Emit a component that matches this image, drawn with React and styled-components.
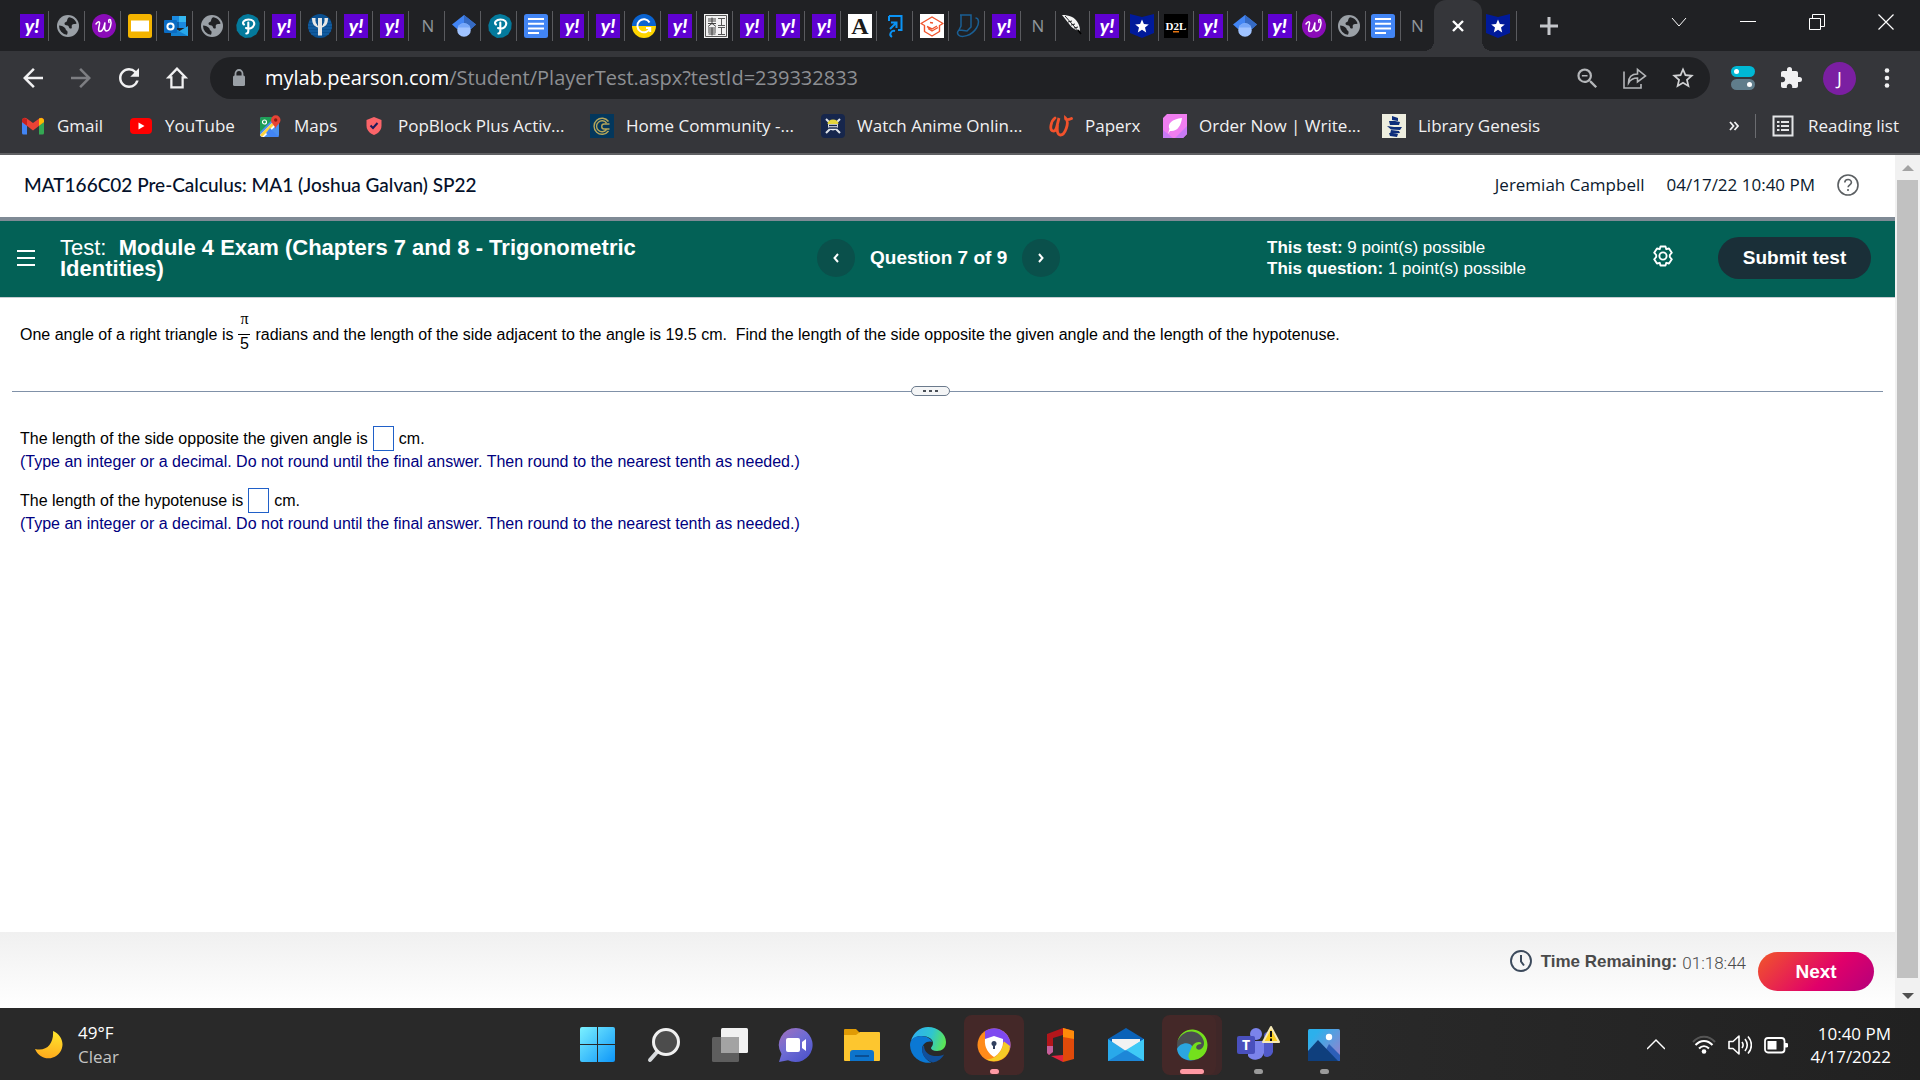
import React from "react";
import styled, { createGlobalStyle } from "styled-components";

const ui = '"Open Sans", "Noto Sans", sans-serif';
const arial = '"Liberation Sans", Arial, sans-serif';

const Global = createGlobalStyle`
  * { box-sizing: border-box; }
  body { margin: 0; background: #fff; font-family: ${arial}; }
  button { border: 0; padding: 0; background: none; font: inherit; color: inherit; cursor: pointer; }
  a { color: inherit; text-decoration: none; }
  svg { display: block; flex: none; }
`;

const Screen = styled.div`
  min-height: 100vh;
  display: flex;
  flex-direction: column;
`;

/* ---------- browser chrome ---------- */

const TabStrip = styled.div`
  height: 51px;
  background: #202124;
  display: flex;
  padding-left: 14px;
`;
const TabGroup = styled.div`
  display: flex;
  flex: 0 0 ${(p) => p.$width}px;
`;
const Tab = styled.button`
  flex: 1 1 0;
  min-width: 0;
  display: flex;
  align-items: center;
  justify-content: space-between;
  padding-left: ${(p) => (p.$tight ? 4 : 6)}px;
  &::after {
    content: "";
    width: 1px;
    height: 30px;
    margin-right: 1px;
    background: #5a5b5f;
    visibility: ${(p) => (p.$last ? "hidden" : "visible")};
  }
`;
const ActiveTab = styled.button`
  flex: 0 0 48px;
  margin-left: -2px;
  border-radius: 12px 12px 0 0;
  background: #35363a;
  display: flex;
  align-items: center;
  justify-content: center;
  position: relative;
  &::before, &::after {
    content: "";
    position: absolute;
    bottom: 0;
    width: 10px;
    height: 10px;
  }
  &::before { right: 100%; background: radial-gradient(circle at 0 0, transparent 10px, #35363a 10px); }
  &::after { left: 100%; background: radial-gradient(circle at 100% 0, transparent 10px, #35363a 10px); }
`;
const NewTab = styled.button`
  width: 62px;
  display: grid;
  place-items: center;
`;
const WindowButtons = styled.div`
  margin-left: auto;
  display: flex;
  height: 44px;
`;
const WindowButton = styled.button`
  width: 69px;
  display: grid;
  place-items: center;
`;

const Toolbar = styled.div`
  height: 54px;
  background: #35363a;
  display: flex;
  align-items: center;
  padding: 0 18px 0 9px;
`;
const ToolButton = styled.button`
  width: 48px;
  height: 42px;
  display: grid;
  place-items: center;
`;
const Omnibox = styled.div`
  flex: 1;
  height: 42px;
  margin: 0 9px;
  padding: 0 3px 0 20px;
  border-radius: 21px;
  background: #202124;
  display: flex;
  align-items: center;
`;
const Address = styled.div`
  flex: 1;
  margin-left: 17px;
  font: 20px/28px ${ui};
  color: #8d8f93;
  white-space: nowrap;
  b { font-weight: 400; color: #fff; }
`;
const Avatar = styled.button`
  width: 33px;
  height: 33px;
  margin: 0 8px;
  border-radius: 50%;
  background: #7b1fa2;
  color: #fff;
  font: 18px/33px ${ui};
`;
const DotsButton = styled(ToolButton)`
  width: 30px;
  margin-left: 8px;
`;

const Bookmarks = styled.nav`
  height: 50px;
  background: #35363a;
  border-bottom: 2px solid #5f6063;
  display: flex;
  align-items: center;
  padding: 0 21px 6px;
  font: 17px/24px ${ui};
  color: #f1f1f2;
  white-space: nowrap;
`;
const Bookmark = styled.a`
  display: flex;
  align-items: center;
  gap: 12px;
  flex: 0 0 ${(p) => p.$width}px;
`;
const BookmarkEnd = styled.div`
  margin-left: auto;
  display: flex;
  align-items: center;
  gap: 16px;
`;
const Rule = styled.span`
  width: 1px;
  height: 24px;
  background: #6b6c70;
`;
const ReadingList = styled.button`
  display: flex;
  align-items: center;
  gap: 14px;
`;

/* ---------- page ---------- */

const Viewport = styled.div`
  flex: 1;
  display: flex;
`;
const Page = styled.main`
  flex: 1;
  display: flex;
  flex-direction: column;
  background: #fff;
`;
const CourseBar = styled.header`
  height: 66px;
  border-bottom: 4px solid #7f8a95;
  display: flex;
  align-items: center;
  gap: 22px;
  padding: 0 36px 2px 24px;
  color: #0b1a2e;
  font: 17px/24px ${ui};
`;
const CourseName = styled.h1`
  margin: 0 auto 0 0;
  font: 500 19px/24px Lato, sans-serif;
  color: #05112a;
`;
const TestBar = styled.section`
  min-height: 77px;
  background: #036156;
  border-bottom: 1px solid #c7cdd1;
  color: #fff;
  display: grid;
  grid-template-columns: 60px 757fr 450fr 385fr 66px 153px;
  align-items: center;
  padding: 0 24px 2px 0;
`;
const MenuButton = styled.button`
  padding-left: 17px;
`;
const TestTitle = styled.h2`
  margin: 0;
  max-width: 600px;
  font: 400 22px/21px ${arial};
`;
const QuestionNav = styled.div`
  display: flex;
  align-items: center;
  gap: 15px;
  font: bold 19px/24px ${arial};
`;
const Round = styled.button`
  width: 38px;
  height: 38px;
  border-radius: 50%;
  background: #0a504b;
  display: grid;
  place-items: center;
`;
const Points = styled.p`
  margin: 0;
  font-size: 17px;
  line-height: 21px;
`;
const SettingsButton = styled.button`
  padding-bottom: 4px;
`;
const SubmitButton = styled.button`
  height: 42px;
  border-radius: 21px;
  background: #1a2f38;
  color: #fff;
  font: bold 19px/24px ${arial};
`;

const Exercise = styled.section`
  flex: 1;
  padding: 12px 12px 0;
  font-size: 16px;
  line-height: 23px;
  color: #000;
`;
const Prompt = styled.p`
  margin: 0 8px;
  display: flex;
  align-items: center;
  gap: 5px;
  white-space: pre;
`;
const Fraction = styled.span`
  display: inline-flex;
  flex-direction: column;
  align-items: center;
  width: 12px;
  line-height: 18px;
  padding-bottom: 6px;
  span:first-child {
    align-self: stretch;
    text-align: center;
    padding-bottom: 6px;
    border-bottom: 1px solid #000;
    font-family: "Liberation Serif", serif;
  }
`;
const Splitter = styled.div`
  display: flex;
  align-items: center;
  margin: 27px 0 29px;
  &::before, &::after {
    content: "";
    flex: 27;
    height: 1px;
    background: #8091a8;
  }
  &::after { flex: 28; }
`;
const Handle = styled.button`
  width: 39px;
  height: 10px;
  border: 1px solid #6b7a8c;
  border-radius: 5px;
  background: #f4f5f6;
  display: flex;
  align-items: center;
  justify-content: center;
  gap: 3px;
  i { width: 3px; height: 2px; background: #4a4f57; }
`;
const Answer = styled.div`
  margin: 0 8px 16px;
  label { display: flex; align-items: center; gap: 5px; height: 27px; }
`;
const AnswerBox = styled.input`
  width: 21px;
  height: 25px;
  padding: 0 2px;
  border: 1px solid #2060c8;
  font: 16px/23px ${arial};
`;
const Hint = styled.p`
  margin: 0;
  line-height: 19px;
  color: #000080;
`;

const Footer = styled.footer`
  height: 76px;
  background: linear-gradient(#f0f0f0, #fff);
  display: flex;
  align-items: flex-start;
  justify-content: flex-end;
  gap: 12px;
  padding: 18px 21px 0;
`;
const Timer = styled.div`
  display: flex;
  gap: 5px;
  font: 17px/24px ${arial};
  color: #4a4a4a;
  svg { margin-right: 4px; }
  time { font-family: Roboto, sans-serif; font-weight: 300; line-height: 26px; }
`;
const NextButton = styled.button`
  width: 116px;
  height: 39px;
  margin-top: 2px;
  border-radius: 20px;
  background: linear-gradient(135deg, #f0502f 5%, #e0006a 60%, #b3007c);
  color: #fff;
  font: bold 19px/24px ${arial};
`;

const Scrollbar = styled.div`
  width: 25px;
  background: #f1f1f1;
  display: flex;
  flex-direction: column;
  align-items: center;
`;
const ScrollArrow = styled.button`
  height: ${(p) => p.$size}px;
  display: grid;
  place-items: center;
`;
const Thumb = styled.div`
  flex: 1;
  width: 21px;
  background: #c1c1c1;
`;

/* ---------- taskbar ---------- */

const Taskbar = styled.footer`
  height: 72px;
  padding: 2px 0 0 2px;
  background: linear-gradient(90deg, #292929 70%, #212121);
  color: #fff;
  display: grid;
  grid-template-columns: 1fr auto 1fr;
  align-items: center;
  font: 17px/23px ${ui};
`;
const Weather = styled.button`
  justify-self: start;
  display: flex;
  align-items: center;
  gap: 14px;
  padding-left: 32px;
  text-align: left;
  line-height: 24px;
  span span { display: block; }
  span span + span { color: #c4c4c4; }
`;
const Apps = styled.div`
  display: flex;
  gap: 6px;
`;
const AppButton = styled.button`
  width: 60px;
  height: 60px;
  border-radius: 8px;
  background: ${(p) => (p.$lit ? "#442828" : "none")};
  box-shadow: ${(p) => (p.$stack ? "inset -6px 0 #3f2728" : "none")};
  display: grid;
  place-items: center;
  position: relative;
  &::after {
    content: "";
    position: absolute;
    bottom: 1px;
    height: 5px;
    border-radius: 3px;
    width: ${(p) => p.$bar || 0}px;
    background: ${(p) => (p.$lit ? "#ff99a4" : "#9a9a9a")};
  }
`;
const Tray = styled.div`
  justify-self: end;
  display: flex;
  align-items: center;
  gap: 12px;
  padding-right: 29px;
`;
const Clock = styled.div`
  margin-left: 7px;
  min-width: 84px;
  text-align: right;
`;
const TrayChevron = styled.button`
  margin-right: 15px;
`;

/* ---------- favicons ---------- */

const Glyph = styled.span`
  width: 24px;
  height: 24px;
  flex: none;
  display: grid;
  place-items: center;
  background: ${(p) => p.$bg || "none"};
  color: ${(p) => p.$fg || "#fff"};
  font: ${(p) => p.$font};
`;
const Ic = ({ s = 24, vb = "0 0 24 24", children, ...r }) => (
  <svg width={s} height={s} viewBox={vb} fill="none" aria-hidden="true" {...r}>{children}</svg>
);

const Yahoo = () => <Glyph $bg="#5f01d1" $font='italic 900 19px/20px Lato, sans-serif'>y!</Glyph>;
const Letter = () => <Glyph $fg="#8f969b" $font={`17px/24px ${ui}`}>N</Glyph>;
const SerifA = () => <Glyph $bg="#fff" $fg="#1a1a1a" $font='bold 24px/24px "Liberation Serif", serif'>A</Glyph>;
const D2L = () => (
  <Ic><rect width="24" height="24" fill="#000" /><text x="12" y="16" textAnchor="middle" fontSize="11" fontWeight="bold" fontFamily="Liberation Serif, serif" fill="#fff">D2L</text><path d="M9 17h6v1.500H9z" fill="#e87511" /></Ic>
);
const Globe = () => (
  <Ic><circle cx="12" cy="12" r="11" fill="#9aa0a6" /><path d="M3 11.500c3 0 4.500 1 6 2.500 1 1 .5 2 1.500 2.500 1.200.6 1.500 2 .5 4.300A9 9 0 0 1 3 11.500zM13 3.200c3.800.5 6.800 3 7.600 6.300-1.600 1-3.600 0-4.600 1.500-1 1.400 1 3.500-1.500 3.500-2 0-1-2.500-3-3-1.500-.4-3-.5-3-2s1.500-1 2.300-2.200C11.500 6 11 4.500 13 3.200z" fill="#202124" /></Ic>
);
const Wiris = () => (
  <Ic><circle cx="12" cy="12" r="12" fill="#8a0cb8" /><path d="M4 10c2-3 4-3 3.500 0s-2 7.500.5 7.500 4-4 5-9c-.5 4-1 8.500 1.500 8.500 3.500 0 5.500-8 4-11-1-1.500-2.500 0-1.500 2.500" stroke="#fff" strokeWidth="1.500" strokeLinecap="round" /></Ic>
);
const Slides = () => <Ic><rect width="24" height="24" rx="2.500" fill="#f4b400" /><path d="M3 6.500h18v11H3z" fill="#fff" /></Ic>;
const Docs = () => <Ic><rect width="24" height="24" rx="2.500" fill="#4285f4" /><path d="M4 5h16M4 9.700h16M4 14.400h16M4 19h11" stroke="#fff" strokeWidth="2" /></Ic>;
const Outlook = () => (
  <Ic><path d="M8 2h14v12H8z" fill="#1a8ae0" /><path d="M15 2h7v6h-7z" fill="#35b8f1" /><path d="M8 8h7v6H8z" fill="#0f5fa8" /><path d="M7 12l8.500 5L24 12v10H7z" fill="#28a8ea" /><path d="M7 13v9h17z" fill="#1380ce" /><rect y="6" width="13" height="13" rx="1" fill="#0a6cc4" /><circle cx="6.500" cy="12.500" r="3.100" stroke="#fff" strokeWidth="2" /></Ic>
);
const Pearson = () => (
  <Ic><path d="M12 0l5 1.200L21.500 4 23.700 9l-.5 6-3 5.500L15 23.500 9 24l-5-3L.8 16.500.3 11 2.500 5 7 1.200z" fill="#047a9c" /><path d="M8 10.500C5.500 9 8 5.500 12.500 5.500S19 8 18 11s-5 4.500-8 3M12.300 8.500v8.500c0 1.800-.8 2.500-2 2.500" stroke="#fff" strokeWidth="2.100" strokeLinecap="round" /></Ic>
);
const Psi = () => (
  <Ic><circle cx="12" cy="12" r="12" fill="#0a4f8f" /><path d="M1 8h22M0 11h24M0 14h24M1 17h22M3 20h18M3 5h18" stroke="#1c6cb4" strokeWidth=".8" /><path d="M4 4h3.500c-.3 4 .5 6 2.500 7V4h4v7c2-1 2.800-3 2.500-7H20c0 5.500-2 8.500-6 9.500v8h-4v-8C6 12.500 4 9.500 4 4z" fill="#e6e6e6" /><path d="M9.500 4v7.500M14.500 4v7.500" stroke="#0a4f8f" /></Ic>
);
const Scholar = () => (
  <Ic><path d="M12 1L24 10.500 19 15H5L0 10.500z" fill="#4285f4" /><path d="M12 1L24 10.500 19 15 12 9z" fill="#356ac3" /><circle cx="12" cy="16" r="6.800" fill="#a0c3ff" /><path d="M5.700 13.500a6.800 6.800 0 0 1 12.600 0z" fill="#76a7fa" /></Ic>
);
const Grammar = () => (
  <Ic><path d="M0 12a12 12 0 0 1 24 0z" fill="#0a63d0" /><path d="M0 12a12 12 0 0 0 24 0z" fill="#ffd500" /><path d="M17.500 8.500A6.500 6.500 0 1 0 18 14h-4M18.200 13.500V18" stroke="#fff" strokeWidth="2" /></Ic>
);
const Seal = () => (
  <Ic><rect width="24" height="24" fill="#f2f2f2" /><path d="M1.500 1.500h21v21h-21zM14 4.500h7M17.500 4.500v7M14 11.500h7M14 13.500h7M17.500 13.500v7M14 20.500h7" stroke="#555" /><path d="M4 5h8M4 7h8M4 9.500h8M8 3.500v6M8 9.500l-4 3M8 9.500l4 3M4 14h8M4 16h8M4 18h8M8 13.500v8M4.500 20h7" stroke="#333" strokeWidth=".9" /></Ic>
);
const ArrowSquare = () => <Ic><path d="M5 2h12.500v14H14M5 2v5M11 17c-4-1-6.500 4-3 6M6 15l6.500-6.500M7 8.500h5.500V14" stroke="#0a93f5" strokeWidth="2" /></Ic>;
const Cap = () => (
  <Ic><rect width="24" height="24" fill="#fff" /><path d="M12 3L1 9.500l3.500 2v6L12 22l7.500-4.500v-6l3.500-2zM8 14.500l4 2.500 6-3.500M7 12.500L12 15l5-3M10 8.500l3 .5" stroke="#f0542c" strokeWidth="1.400" strokeLinejoin="round" /></Ic>
);
const Orbit = () => <Ic><path d="M4 1h11v12l-4 4-7-1c-2 0-3.500 3-1.500 5 3 3 13 1 18-7 3-5 2.500-10-1-10M5 1v11l-2 4" stroke="#1a5f94" strokeWidth="1.500" /></Ic>;
const Feather = () => <Ic><path d="M1 1c7 0 13 2 16 8 1.500 3 2 5 2 8-4-.5-8-3-10.500-6.500z" fill="#f4f4f4" /><path d="M4 2l15 17M7 8l4-1M10 11l4-1M13 14l4-1" stroke="#202124" strokeWidth="1" /><path d="M17 16l3 4" stroke="#000" strokeWidth="1.500" /></Ic>;
const Star = () => <Ic><path d="M0 0l12 3L24 0v19l-12 5-12-5z" fill="#001a9a" /><path d="M12 5.500l1.900 4.600 4.900.3-3.800 3.200 1.200 4.800L12 15.800l-4.200 2.600L9 13.600l-3.800-3.200 4.900-.3z" fill="#fff" /></Ic>;

const firstTabs = [Yahoo, Globe, Wiris, Slides, Outlook, Globe, Pearson, Yahoo, Psi, Yahoo, Yahoo, Letter, Scholar, Pearson, Docs, Yahoo, Yahoo, Grammar, Yahoo, Seal, Yahoo, Yahoo, Yahoo, SerifA, ArrowSquare, Cap, Orbit, Yahoo];
const secondTabs = [Letter, Feather, Yahoo, Star, D2L, Yahoo, Scholar, Yahoo, Wiris, Globe, Docs, Letter];

const Gmail = () => (
  <Ic><path d="M1 6v13a1.500 1.500 0 0 0 1.500 1.500H6V10z" fill="#4285f4" /><path d="M23 6v13a1.500 1.500 0 0 1-1.500 1.500H18V10z" fill="#34a853" /><path d="M1 6.500C1 4 4 3 5.800 4.500L12 9l6.200-4.500C20 3 23 4 23 6.500V8l-11 8.500L1 8z" fill="#ea4335" /><path d="M18 4.600c2-1.500 5-.5 5 2V8l-5 3.800z" fill="#fbbc04" /><path d="M1 6.500C1 5 2 4 3 3.900L6 5v6.800L1 8z" fill="#c5221f" /></Ic>
);
const YouTube = () => <Ic><rect x="1" y="4" width="22" height="16" rx="4" fill="#f00" /><path d="M9.500 8.500v7l6-3.500z" fill="#fff" /></Ic>;
const Maps = () => (
  <Ic><rect x="2" y="3" width="19" height="20" rx="2" fill="#4a90f0" /><path d="M2 5a2 2 0 0 1 2-2h13L2 18z" fill="#1e9e57" /><path d="M2 21l17-17 2 2v3L6 23H4z" fill="#fff" /><path d="M2 21L14 9l2 2L4 23z" fill="#fdd23c" /><path d="M12 14l9 9h-9l-4-4z" fill="#4285f4" /><path d="M17.500 15c-.5-4-4.500-5-4.500-9a4.500 4.500 0 0 1 9.500 0c0 4-4.500 5-5 9z" fill="#e74335" /><circle cx="17.700" cy="6" r="1.700" fill="#8c1a11" /><circle cx="6.500" cy="8" r="2" stroke="#fff" strokeWidth="1.200" /></Ic>
);
const PopBlock = () => <Ic><path d="M12 3l7.500 3v5.500c0 4.500-3 7.800-7.500 9.500-4.500-1.700-7.500-5-7.500-9.500V6z" fill="#fb6469" /><path d="M8.500 11.500L11 14l4.500-5" stroke="#1c1b5c" strokeWidth="2" /></Ic>;
const College = () => <Ic><rect width="24" height="24" fill="#03375c" /><path d="M18.500 7.500A8 8 0 1 0 18.500 17M16.500 9a5.500 5.500 0 1 0 0 6.500M19.500 10H14c-3 0-3 5 0 5h5.500" stroke="#b4a55a" strokeWidth="1.400" /></Ic>;
const Anime = () => <Ic><rect width="24" height="24" rx="4" fill="#16264c" /><path d="M5 5l14 14M19 5L5 19" stroke="#dfe4ea" strokeWidth="2" /><circle cx="12" cy="11.500" r="5" fill="#eceff2" /><path d="M6.500 10a5.500 4.500 0 0 1 11 0z" fill="#e6d63c" /><path d="M8 11.500h8M8 14h8" stroke="#16264c" strokeWidth="1.300" /></Ic>;
const PaperxIcon = () => <Ic><path d="M6 4C2 7 0 16 4 17s4.500-9 6-13c-2 6-3 16 1 17 5 .5 10-13 5.500-17 0 2 2.500 2 6 .5" stroke="#f2522c" strokeWidth="2.800" strokeLinecap="round" /></Ic>;
const Quill = () => <Ic><path d="M4 0h20v20l-4 4H0V4z" fill="#f07ef0" /><path d="M0 16l10 8H0zM24 12v8l-4 4h-8z" fill="#c87af4" /><path d="M19 4C9 5 4 10 6.500 15L5 20l2-3c7 1 11-5 12-13z" fill="#fff" /></Ic>;
const Genesis = () => <Ic><rect width="24" height="24" fill="#eeeedf" /><path d="M10 2l6 2v3l-6-1zM7 7h6l5 1-1 3H8zM5 12l7 1h8l-2 3-9-.5zM9 16l8 1 1 2-10 1zM7 19l9 1-1 3-7-1z" fill="#0d2d7a" /></Ic>;

const bookmarks = [
  ["Gmail", Gmail, 108], ["YouTube", YouTube, 129], ["Maps", Maps, 104], ["PopBlock Plus Activ...", PopBlock, 228],
  ["Home Community -...", College, 231], ["Watch Anime Onlin...", Anime, 228], ["Paperx", PaperxIcon, 114],
  ["Order Now | Write...", Quill, 219], ["Library Genesis", Genesis, 156],
];

/* ---------- taskbar app icons ---------- */

const Start = () => (
  <Ic s={36} vb="0 0 36 36"><defs><linearGradient id="win" x1="0" y1="0" x2="36" y2="36" gradientUnits="userSpaceOnUse"><stop stopColor="#7bf1ff" /><stop offset="1" stopColor="#0a93f8" /></linearGradient></defs><path d="M2 0h15v17H0V2a2 2 0 0 1 2-2zM18 0h15a2 2 0 0 1 2 2v15H18zM0 18h17v17H2a2 2 0 0 1-2-2zM18 18h17v15a2 2 0 0 1-2 2H18z" fill="url(#win)" /></Ic>
);
const Search = () => <Ic s={36} vb="0 0 36 36"><path d="M11 25L4 33" stroke="#d6d9dc" strokeWidth="4" strokeLinecap="round" /><circle cx="20" cy="15" r="12.500" fill="#4c4c4c" stroke="#f0f0f0" strokeWidth="3" /></Ic>;
const TaskView = () => <Ic s={36} vb="0 0 36 36"><rect x="9" y="1" width="27" height="25" rx="1.500" fill="#f1f1f1" /><rect y="10" width="27" height="25" rx="1.500" fill="#5e5e5e" /><path d="M9 10h18v16H9z" fill="#a3a3a3" /></Ic>;
const Chat = () => (
  <Ic s={36} vb="0 0 36 36"><defs><linearGradient id="chat" x1="4" y1="4" x2="26" y2="32" gradientUnits="userSpaceOnUse"><stop stopColor="#9a6fc0" /><stop offset=".5" stopColor="#6f6cd4" /><stop offset="1" stopColor="#5257cc" /></linearGradient></defs><path d="M18 1a17 17 0 1 1-8 32.200L1 35l2.500-8A17 17 0 0 1 18 1z" fill="url(#chat)" /><rect x="8" y="11" width="14" height="14" rx="2" fill="#fff" /><path d="M24 15l4-3v12l-4-3z" fill="#fff" /></Ic>
);
const Explorer = () => <Ic s={36} vb="0 0 36 36"><path d="M0 3a1 1 0 0 1 1-1h11l4 4v5H0z" fill="#e09b05" /><path d="M0 8h12l4-3h19a1 1 0 0 1 1 1v27a1 1 0 0 1-1 1H1a1 1 0 0 1-1-1z" fill="#fdc62f" /><path d="M6 34v-8a3 3 0 0 1 3-3h18a3 3 0 0 1 3 3v8z" fill="#0d74cc" /><path d="M11 29h14" stroke="#0a4f94" strokeWidth="2" /></Ic>;
const Edge = () => (
  <Ic s={36} vb="0 0 36 36"><defs><linearGradient id="edge" x1="2" y1="8" x2="34" y2="18" gradientUnits="userSpaceOnUse"><stop stopColor="#2fb0ef" /><stop offset=".55" stopColor="#2fc5d0" /><stop offset="1" stopColor="#5be556" /></linearGradient></defs><path d="M1 14C3 6 10 0 18 0c10 0 18 7 18 15 0 6-4 9-9 9-4 0-6-1.500-6-3 0-1 2-2 2-5 0-4-5-7-11-7-5 0-9 2-11 5z" fill="url(#edge)" /><path d="M0 18c0-6 5-9 11-9 6 0 10 3 11.500 6-6-2-12 3-10 10 1 5 5 9 9 10.500A18 18 0 0 1 0 18z" fill="#0b78d4" /><path d="M13 19c-3 6 2 15 10 16.400 5-1 9-4 11-8-8 4-20 1-20-9z" fill="#10509c" /></Ic>
);
const SecureBrowser = () => <Ic s={34} vb="0 0 34 34"><circle cx="17" cy="17" r="16.500" fill="#ff8b1a" /><path d="M8 3a16.500 16.500 0 0 1 25 18l-9-9-16-1z" fill="#7f4af0" /><path d="M33 18A16.500 16.500 0 0 1 9 31.500c6 0 15-3 18-18z" fill="#f5cb26" /><path d="M17 8l9 3c1 9-4 15-9 18-5-3-10-9-9-18z" fill="#fff" /><circle cx="17" cy="15.500" r="2.500" fill="#32405e" /><path d="M16 16h2v5h-2z" fill="#32405e" /></Ic>;
const Office = () => <Ic s={34} vb="0 0 34 34"><path d="M20 0L4 6v19l2 2 4-3V10l10-3z" fill="#b3161b" /><path d="M4 18v7l2 2 4-3v-6z" fill="#c4609c" /><path d="M20 0l11 3v28l-11 3z" fill="#e04a0a" /><path d="M20 0l11 3v8l-11-2z" fill="#ff8a0a" /><path d="M8 28l12-1v7z" fill="#e3233f" /></Ic>;
const Mail = () => <Ic s={36} vb="0 0 36 36"><path d="M0 12L18 1l18 11v6H0z" fill="#0a62b8" /><path d="M4 12h28v9l-14 8L4 21z" fill="#f2f2f2" /><path d="M0 12l18 12 18-12v22H0z" fill="#29a9ea" /><path d="M36 12v22L18 23z" fill="#3fcaf6" /><path d="M0 34l18-11 18 11z" fill="#1d87d8" /></Ic>;
const Swirl = () => (
  <Ic s={34} vb="0 0 34 34"><circle cx="17" cy="17" r="15" fill="#4b4f52" /><path d="M2 21c2-6 12-8 15-3 2 4-1 8 3 14C10 34 3 29 2 21z" fill="#2ba6e0" /><path d="M2 15C4 5 12 1 18 1.500c8 .5 14.500 7 14.500 15.500C32.500 26 25 33 15 32c-3-4-1-6 0-9 2-6 5-9 9-9 2 0 3 1 2 2-4 0-6 3-4 5 3 2 7-1 7-6 0-5-5-11-12-11.500C10 3 4 8 2 15z" fill="#74e01c" /></Ic>
);
const Teams = () => <Ic s={44} vb="0 0 44 44"><circle cx="20" cy="11" r="6" fill="#7b83eb" /><circle cx="32" cy="13" r="4" fill="#5059c9" /><path d="M26 18h11v11a6 6 0 0 1-9 4z" fill="#5059c9" /><path d="M12 18h16v12a9 9 0 0 1-16 3z" fill="#7b83eb" /><rect x="1" y="13" width="18" height="18" rx="2" fill="#4950bd" /><text x="10" y="27" textAnchor="middle" fontSize="14" fontWeight="bold" fontFamily="Open Sans, sans-serif" fill="#fff">T</text><path d="M35 4l8 15H27z" fill="#fdd022" stroke="#f5e9b8" strokeWidth="2" strokeLinejoin="round" /><path d="M35 8v6M35 15.500V18" stroke="#111" strokeWidth="2" /></Ic>;
const Photos = () => <Ic s={32} vb="0 0 32 32"><defs><linearGradient id="pic" x1="8" y1="4" x2="32" y2="24" gradientUnits="userSpaceOnUse"><stop stopColor="#2cb0ec" /><stop offset="1" stopColor="#8d86cf" /></linearGradient></defs><rect width="32" height="32" rx="1.500" fill="url(#pic)" /><path d="M21 15L32 26v6H12z" fill="#2d5fb8" /><path d="M0 22L10 11l20 21H0z" fill="#0f3f7d" /><circle cx="21" cy="8" r="3.200" fill="#fff" /></Ic>;

const apps = [
  ["Start", Start], ["Search", Search], ["Task view", TaskView], ["Chat", Chat], ["File Explorer", Explorer], ["Edge", Edge],
  ["Secure Browser", SecureBrowser, { $lit: true, $bar: 9 }], ["Office", Office], ["Mail", Mail],
  ["Webroot", Swirl, { $lit: true, $stack: true, $bar: 24 }], ["Teams", Teams, { $bar: 9 }], ["Photos", Photos, { $bar: 9 }],
];

const hint = "(Type an integer or a decimal. Do not round until the final answer. Then round to the nearest tenth as needed.)";

export default function App() {
  return (
    <Screen>
      <Global />
      <TabStrip>
        <TabGroup $width={1008}>
          {firstTabs.map((Icon, i) => <Tab key={i}><Icon /></Tab>)}
        </TabGroup>
        <TabGroup $width={414}>
          {secondTabs.map((Icon, i) => <Tab key={i} $tight $last={i === secondTabs.length - 1}><Icon /></Tab>)}
        </TabGroup>
        <ActiveTab aria-label="Close tab">
          <Ic s={14} vb="0 0 14 14"><path d="M2 2l10 10M12 2L2 12" stroke="#fff" strokeWidth="2.400" /></Ic>
        </ActiveTab>
        <TabGroup $width={36}><Tab $tight><Star /></Tab></TabGroup>
        <NewTab aria-label="New tab">
          <Ic s={18} vb="0 0 18 18"><path d="M9 0v18M0 9h18" stroke="#c4c6ca" strokeWidth="3" /></Ic>
        </NewTab>
        <WindowButtons>
          <WindowButton aria-label="Search tabs"><Ic s={16} vb="0 0 16 16"><path d="M1 4l7 8 7-8" stroke="#fff" /></Ic></WindowButton>
          <WindowButton aria-label="Minimize"><Ic s={16} vb="0 0 16 16"><path d="M0 7.500h16" stroke="#fff" /></Ic></WindowButton>
          <WindowButton aria-label="Restore"><Ic s={16} vb="0 0 16 16"><path d="M.5 4.500h11v11H.5zM3.500 4.500v-4h12v12h-4" stroke="#fff" /></Ic></WindowButton>
          <WindowButton aria-label="Close"><Ic s={16} vb="0 0 16 16"><path d="M.5.5l15 15M15.500.5l-15 15" stroke="#fff" strokeWidth="1.200" /></Ic></WindowButton>
        </WindowButtons>
      </TabStrip>

      <Toolbar>
        <ToolButton aria-label="Back"><Ic s={30}><path d="M20 11H7.830l5.590-5.590L12 4l-8 8 8 8 1.410-1.410L7.830 13H20z" fill="#f1f1f2" /></Ic></ToolButton>
        <ToolButton aria-label="Forward"><Ic s={30}><path d="M4 11h12.170l-5.590-5.590L12 4l8 8-8 8-1.410-1.410L16.170 13H4z" fill="#7d7e82" /></Ic></ToolButton>
        <ToolButton aria-label="Reload"><Ic s={30}><path d="M17.650 6.350A7.958 7.958 0 0 0 12 4c-4.420 0-7.990 3.580-7.990 8s3.570 8 7.990 8c3.730 0 6.840-2.550 7.730-6h-2.080A5.990 5.990 0 0 1 12 18c-3.310 0-6-2.690-6-6s2.690-6 6-6c1.660 0 3.140.69 4.220 1.780L13 11h7V4z" fill="#f1f1f2" /></Ic></ToolButton>
        <ToolButton aria-label="Home"><Ic s={30}><path d="M12 4.500L5.200 11.500H7.500v8h9v-8h2.300z" stroke="#f1f1f2" strokeWidth="1.800" /></Ic></ToolButton>
        <Omnibox>
          <Ic s={18} vb="0 0 14 18"><path d="M3.500 7V4.500a3.500 3.500 0 0 1 7 0V7" stroke="#9aa0a6" strokeWidth="1.800" /><rect x="1" y="6.500" width="12" height="10.500" rx="1.500" fill="#9aa0a6" /></Ic>
          <Address><b>mylab.pearson.com</b>/Student/PlayerTest.aspx?testId=239332833</Address>
          <ToolButton aria-label="Zoom"><Ic s={27}><path d="M15.500 14h-.79l-.28-.27A6.471 6.471 0 0 0 16 9.500 6.500 6.500 0 1 0 9.500 16c1.610 0 3.090-.59 4.230-1.570l.27.280v.79l5 4.990L20.490 19zm-6 0C7.010 14 5 11.990 5 9.500S7.010 5 9.500 5 14 7.010 14 9.500 11.990 14 9.500 14zM7 8.800h5v1.400H7z" fill="#b4b6b9" /></Ic></ToolButton>
          <ToolButton aria-label="Share"><Ic s={24}><path d="M1 5.500V22h17v-4M5.500 17c0-6 3-9 9-9V3.500L22.500 10l-8 6v-4c-4 0-7 1.500-9 5z" stroke="#b4b6b9" strokeWidth="1.600" /></Ic></ToolButton>
          <ToolButton aria-label="Bookmark"><Ic s={26}><path fillRule="evenodd" d="M22 9.240l-7.190-.62L12 2 9.190 8.630 2 9.240l5.460 4.730L5.820 21 12 17.270 18.180 21l-1.630-7.030zM12 15.400l-3.760 2.270 1-4.280-3.320-2.880 4.380-.38L12 6.100l1.710 4.040 4.380.38-3.320 2.880 1 4.280z" fill="#d0d1d3" /></Ic></ToolButton>
        </Omnibox>
        <ToolButton aria-label="Extension"><Ic><rect width="24" height="11" rx="5.500" fill="#00b8d4" /><circle cx="5.500" cy="5.500" r="2.500" fill="#fff" /><rect y="13" width="24" height="11" rx="5.500" fill="#607d8b" /><circle cx="18.500" cy="18.500" r="2.500" fill="#fff" /></Ic></ToolButton>
        <ToolButton aria-label="Extensions"><Ic s={24}><path d="M20.500 11H19V7c0-1.100-.9-2-2-2h-4V3.500a2.500 2.500 0 0 0-5 0V5H4c-1.100 0-1.990.9-1.990 2v3.800H3.500c1.490 0 2.700 1.210 2.700 2.700s-1.210 2.700-2.700 2.700H2V20c0 1.100.9 2 2 2h3.800v-1.500c0-1.490 1.210-2.700 2.700-2.700s2.700 1.210 2.700 2.700V22H17c1.100 0 2-.9 2-2v-4h1.500a2.500 2.500 0 0 0 0-5z" fill="#f1f1f2" /></Ic></ToolButton>
        <Avatar>J</Avatar>
        <DotsButton aria-label="Menu"><Ic s={24}><circle cx="12" cy="4.500" r="2.300" fill="#f1f1f2" /><circle cx="12" cy="12" r="2.300" fill="#f1f1f2" /><circle cx="12" cy="19.500" r="2.300" fill="#f1f1f2" /></Ic></DotsButton>
      </Toolbar>

      <Bookmarks>
        {bookmarks.map(([name, Icon, width]) => <Bookmark key={name} href="#" $width={width}><Icon />{name}</Bookmark>)}
        <BookmarkEnd>
          <Ic s={10} vb="0 0 10 10"><path d="M1 1l3.500 4L1 9M5.500 1L9 5 5.500 9" stroke="#f1f1f2" strokeWidth="1.800" /></Ic>
          <Rule />
          <ReadingList><Ic s={22} vb="0 0 22 22"><path d="M1.500 1.500h19v19h-19z" stroke="#e4e5e7" strokeWidth="2" /><path d="M5 7h2.500M5 11h2.500M5 15h2.500M9 7h8M9 11h8M9 15h8" stroke="#e4e5e7" strokeWidth="2" /></Ic>Reading list</ReadingList>
        </BookmarkEnd>
      </Bookmarks>

      <Viewport>
        <Page>
          <CourseBar>
            <CourseName>MAT166C02 Pre-Calculus: MA1 (Joshua Galvan) SP22</CourseName>
            <span>Jeremiah Campbell</span>
            <span>04/17/22 10:40 PM</span>
            <button aria-label="Help"><Ic s={22} vb="0 0 22 22"><circle cx="11" cy="11" r="10" stroke="#5b5f62" strokeWidth="1.600" /><path d="M7.800 8.500c0-4 6.600-4 6.600 0 0 2.300-3.300 2.300-3.300 4.800M11 15v2" stroke="#5b5f62" strokeWidth="1.600" /></Ic></button>
          </CourseBar>

          <TestBar>
            <MenuButton aria-label="Menu"><Ic s={18} vb="0 0 18 18"><path d="M0 2h18M0 9h18M0 16h18" stroke="#fff" strokeWidth="2" /></Ic></MenuButton>
            <TestTitle>Test:&nbsp; <b>Module 4 Exam (Chapters 7 and 8 - Trigonometric Identities)</b></TestTitle>
            <QuestionNav>
              <Round aria-label="Previous question"><Ic s={10} vb="0 0 10 10"><path d="M7 1L3.500 5 7 9" stroke="#fff" strokeWidth="2" /></Ic></Round>
              <span>Question 7 of 9</span>
              <Round aria-label="Next question"><Ic s={10} vb="0 0 10 10"><path d="M3 1l3.500 4L3 9" stroke="#fff" strokeWidth="2" /></Ic></Round>
            </QuestionNav>
            <Points><b>This test:</b> 9 point(s) possible<br /><b>This question:</b> 1 point(s) possible</Points>
            <SettingsButton aria-label="Settings"><Ic s={22} vb="0 0 22 22"><path d="M8.500 1.500h5l.8 2.700 2.700-.7 2.800 4.200-2 2.300v2l2 2.300-2.800 4.200-2.700-.7-.8 2.700h-5l-.8-2.700-2.700.7-2.800-4.200 2-2.300v-2l-2-2.300L5 3.500l2.700.7z" stroke="#fff" strokeWidth="1.900" strokeLinejoin="round" /><circle cx="11" cy="11" r="3.600" stroke="#fff" strokeWidth="1.900" /></Ic></SettingsButton>
            <SubmitButton>Submit test</SubmitButton>
          </TestBar>

          <Exercise>
            <Prompt>
              <span>One angle of a right triangle is</span>
              <Fraction><span>π</span><span>5</span></Fraction>
              <span>radians and the length of the side adjacent to the angle is 19.5 cm.  Find the length of the side opposite the given angle and the length of the hypotenuse.</span>
            </Prompt>
            <Splitter><Handle aria-label="Resize"><i /><i /><i /></Handle></Splitter>
            <Answer>
              <label>The length of the side opposite the given angle is <AnswerBox type="text" /> cm.</label>
              <Hint>{hint}</Hint>
            </Answer>
            <Answer>
              <label>The length of the hypotenuse is <AnswerBox type="text" /> cm.</label>
              <Hint>{hint}</Hint>
            </Answer>
          </Exercise>

          <Footer>
            <Timer>
              <Ic s={22} vb="0 0 22 22"><circle cx="11" cy="11" r="10" stroke="#3c4a5c" strokeWidth="1.900" /><path d="M11 5v6.500l3 4" stroke="#3c4a5c" strokeWidth="2" /></Ic>
              <b>Time Remaining:</b>
              <time>01:18:44</time>
            </Timer>
            <NextButton>Next</NextButton>
          </Footer>
        </Page>
        <Scrollbar>
          <ScrollArrow $size={25} aria-label="Scroll up"><Ic s={12} vb="0 0 12 12"><path d="M0 9l6-6 6 6z" fill="#a3a3a3" /></Ic></ScrollArrow>
          <Thumb />
          <ScrollArrow $size={30} aria-label="Scroll down"><Ic s={12} vb="0 0 12 12"><path d="M0 6h12l-6 6z" fill="#505050" /></Ic></ScrollArrow>
        </Scrollbar>
      </Viewport>

      <Taskbar>
        <Weather>
          <Ic s={30} vb="0 0 30 30"><defs><linearGradient id="moon" x1="20" y1="4" x2="16" y2="29" gradientUnits="userSpaceOnUse"><stop stopColor="#ffe12c" /><stop offset="1" stopColor="#ffa91c" /></linearGradient></defs><path d="M19 1c7 3 11 10 9 17C25 30 7 33 1 19c12 3 19-6 18-18z" fill="url(#moon)" /></Ic>
          <span><span>49°F</span><span>Clear</span></span>
        </Weather>
        <Apps>
          {apps.map(([name, Icon, state]) => <AppButton key={name} aria-label={name} {...state}><Icon /></AppButton>)}
        </Apps>
        <Tray>
          <TrayChevron aria-label="Hidden icons"><Ic s={18} vb="0 0 18 18"><path d="M0 13l9-9 9 9" stroke="#fff" strokeWidth="1.500" /></Ic></TrayChevron>
          <Ic><path d="M1 9c6-7 16-7 22 0" stroke="#555" strokeWidth="2" /><path d="M3.500 12c5-5.500 12-5.500 17 0M7 15.500c3-3 7-3 10 0" stroke="#fff" strokeWidth="2" /><circle cx="12" cy="18.500" r="2.300" fill="#fff" /></Ic>
          <Ic><path d="M1 8.500h4L11 3v18l-6-5.500H1zM14 9c1.500 2 1.500 4 0 6M17 6c3 4 3 8 0 12M20 3.500c4.500 5 4.500 12 0 17" stroke="#fff" strokeWidth="1.600" strokeLinejoin="round" /></Ic>
          <Ic><rect x="1" y="5" width="19.500" height="14.500" rx="3" stroke="#fff" strokeWidth="1.800" /><rect x="3.500" y="8" width="9" height="8.500" fill="#fff" /><path d="M21 10h1.500a1.500 1.500 0 0 1 0 4.500H21z" fill="#fff" /></Ic>
          <Clock>10:40 PM<br />4/17/2022</Clock>
        </Tray>
      </Taskbar>
    </Screen>
  );
}
